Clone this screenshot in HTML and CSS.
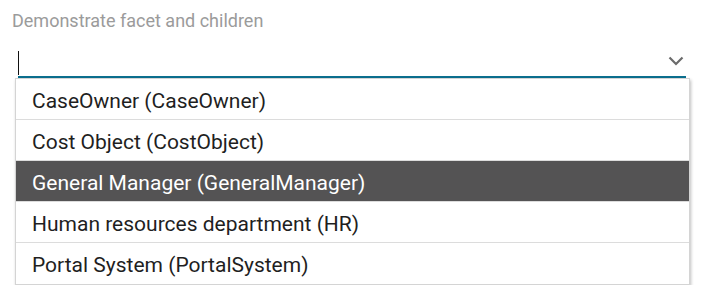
FILE: index.html
```html
<!DOCTYPE html>
<html>
<head>
<meta charset="utf-8">
<link rel="stylesheet" href="styles.css">
</head>
<body>
<div class="page">
  <div class="label">Demonstrate facet and children</div>
  <div class="combo">
    <span class="caret"></span>
    <svg class="chevron" width="16" height="10" viewBox="0 0 16 10"><polyline points="1.5,1.5 8,8 14.5,1.5" fill="none" stroke="#6b6b6b" stroke-width="2.2"/></svg>
  </div>
  <ul class="menu">
    <li class="item">CaseOwner (CaseOwner)</li>
    <li class="item">Cost Object (CostObject)</li>
    <li class="item active">General Manager (GeneralManager)</li>
    <li class="item">Human resources department (HR)</li>
    <li class="item">Portal System (PortalSystem)</li>
  </ul>
</div>
</body>
</html>
```
FILE: styles.css
```css
html, body {
  margin: 0;
  padding: 0;
  background: #fff;
}
.page {
  font-family: Roboto, "Liberation Sans", sans-serif;
  padding-top: 10px;
}
.label {
  margin-left: 12px;
  font-size: 18px;
  line-height: 21px;
  color: #9b9b9b;
}
.combo {
  margin: 17px 0 0 18px;
  width: 668px;
  height: 28px;
  border-bottom: 2px solid #0b6f8e;
  display: flex;
  align-items: center;
  justify-content: space-between;
}
.caret {
  width: 1px;
  height: 24px;
  margin-top: 2px;
  background: #111;
}
.chevron {
  margin-right: 2px;
  margin-top: -2px;
}
.menu {
  list-style: none;
  margin: 0 0 0 15px;
  padding: 0;
  width: 673px;
  border: 1px solid #d4d4d4;
  box-shadow: 1px 2px 3px rgba(0,0,0,0.25);
  background: #fff;
}
.item {
  height: 41px;
  box-sizing: border-box;
  padding: 10px 16px 0;
  font-size: 21px;
  line-height: 24px;
  color: #1f1f1f;
  border-bottom: 1px solid #dcdcdc;
  white-space: nowrap;
}
.item:last-child {
  border-bottom: none;
}
.item.active {
  background: #545354;
  color: #fff;
}
```
